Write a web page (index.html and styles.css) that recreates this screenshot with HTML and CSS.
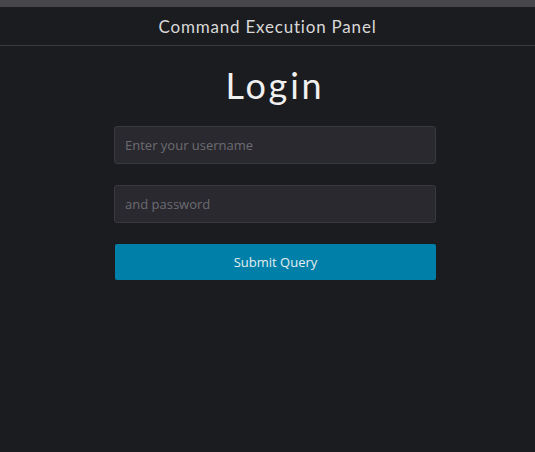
FILE: index.html
```html
<!DOCTYPE html>
<html lang="en">
<head>
<meta charset="utf-8">
<title>Command Execution Panel</title>
<link rel="stylesheet" href="styles.css">
</head>
<body>
<div class="topstrip"></div>
<header class="header">Command Execution Panel</header>
<main class="main">
  <h1 class="title">Login</h1>
  <form class="form">
    <input class="field" type="text" placeholder="Enter your username">
    <input class="field" type="password" placeholder="and password">
    <button class="submit" type="button">Submit Query</button>
  </form>
</main>
</body>
</html>
```
FILE: styles.css
```css
html, body {
  margin: 0;
  padding: 0;
  height: 100%;
}
body {
  background: #1b1c1f;
  font-family: "Open Sans", "Noto Sans", sans-serif;
  color: #e8e8e8;
}
.topstrip {
  height: 7px;
  background: #47474b;
}
.header {
  height: 38px;
  border-bottom: 1px solid #3b3b3e;
  display: flex;
  align-items: center;
  justify-content: center;
  font-family: "Lato", sans-serif;
  font-weight: 400;
  font-size: 17px;
  letter-spacing: 0.8px;
  color: #d8d8d8;
}
.main {
  display: flex;
  flex-direction: column;
  align-items: center;
  padding-left: 15px;
}
.title {
  margin: 17px 0 0;
  font-family: "Lato", sans-serif;
  font-weight: 400;
  font-size: 36px;
  line-height: 44px;
  letter-spacing: 2.8px;
  color: #f0f0f0;
}
.form {
  margin-top: 19px;
  width: 322px;
  display: flex;
  flex-direction: column;
}
.field {
  box-sizing: border-box;
  height: 38px;
  margin: 0 0 21px;
  padding: 0 10px;
  background: #29292f;
  border: 1px solid #38383e;
  border-radius: 3px;
  color: #ddd;
  font-family: "Open Sans", sans-serif;
  font-size: 13px;
  outline: none;
}
.field::placeholder {
  color: #6c6c72;
}
.submit {
  box-sizing: border-box;
  height: 36px;
  margin: 0 0 0 1px;
  background: #0080a8;
  border: none;
  border-radius: 2px;
  color: #e6eef2;
  font-family: "Open Sans", sans-serif;
  font-size: 13px;
}
```
